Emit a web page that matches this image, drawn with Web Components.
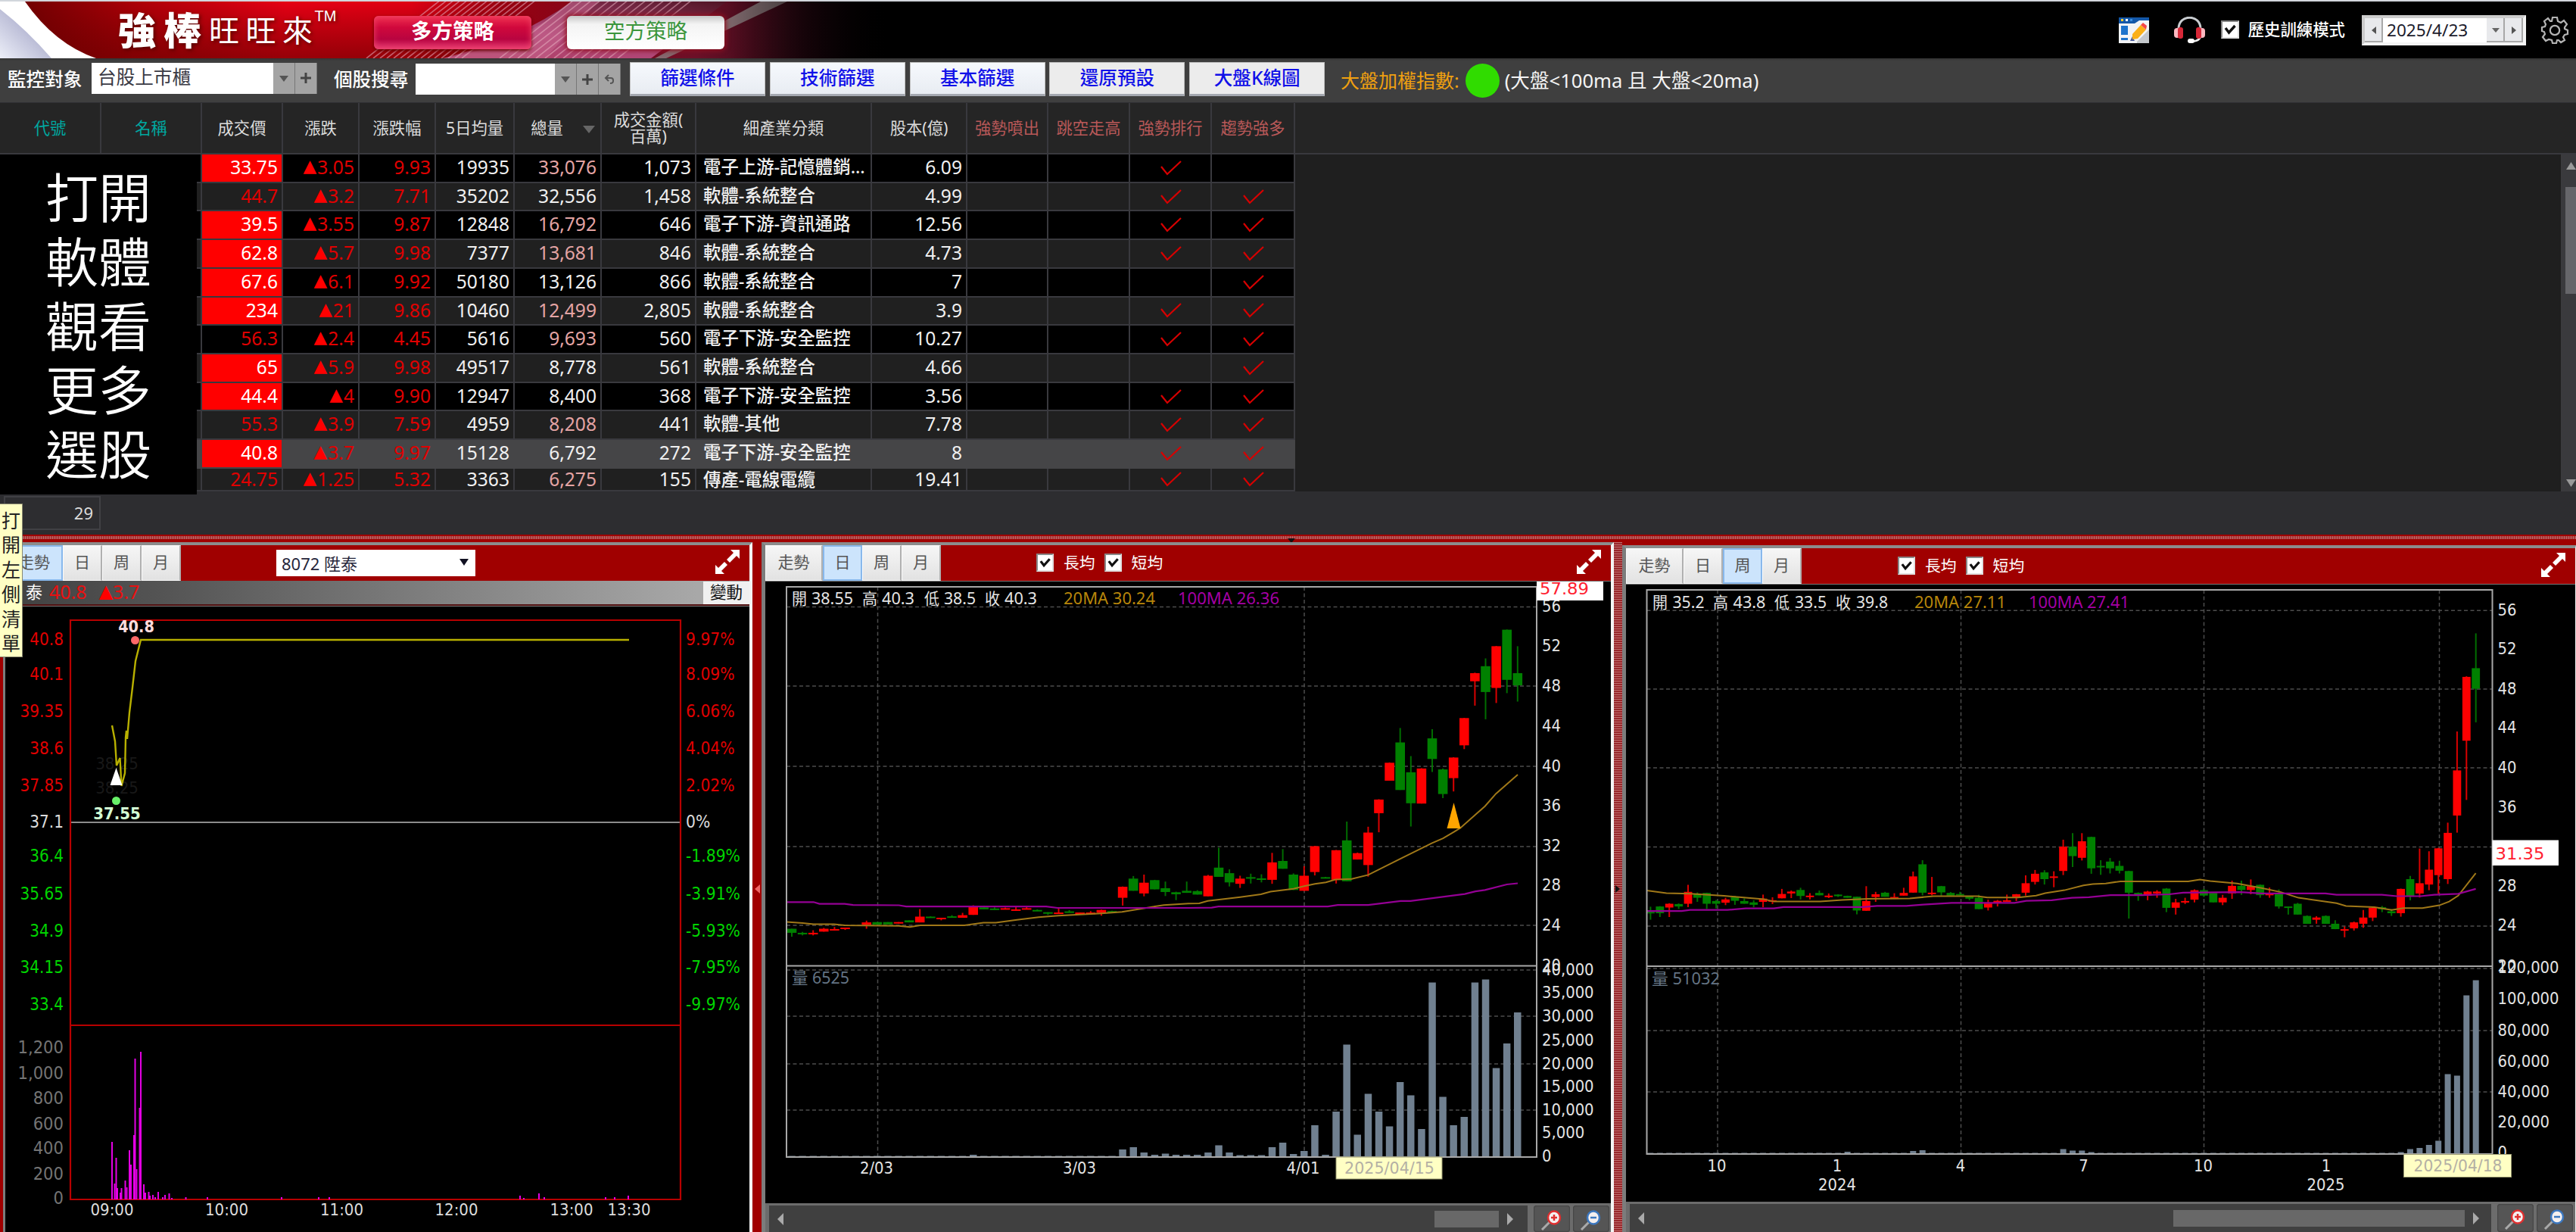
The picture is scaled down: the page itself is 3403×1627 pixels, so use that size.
<!DOCTYPE html>
<html lang="zh-Hant">
<head>
<meta charset="utf-8">
<title>強棒旺旺來</title>
<style>
  body {
    margin: 0;
    width: 3403px;
    height: 1627px;
    overflow: hidden;
    display: flex;
    flex-direction: column;
    background: #a00000;
    color: #fff;
    font-family: "Noto Sans", "Noto Sans CJK TC", sans-serif;
    font-size: 24px;
  }
  .charts {
    display: flex;
    flex: 1;
    min-height: 0;
    padding-left: 4px;
  }
</style>
</head>
<body>
<app-header></app-header>
<tool-bar></tool-bar>
<stock-table></stock-table>
<split-bar></split-bar>
<div class="charts">
  <chart-panel style="width:990px;--left:3px" active="0" kind="intraday">
    <stock-select slot="tools">8072 陞泰</stock-select>
    <intraday-chart></intraday-chart>
  </chart-panel>
  <split-bar vertical plain style="width:12px"></split-bar>
  <chart-panel style="width:1126px" active="1" kind="kline">
    <check-label slot="tools" style="margin-left:126px">長均</check-label>
    <check-label slot="tools" style="margin-left:12px">短均</check-label>
    <kline-chart series="day"></kline-chart>
    <chart-scroll slot="footer" style="--h:38px;--track:1002px;--tl:879px;--tw:85px"></chart-scroll>
  </chart-panel>
  <split-bar vertical style="width:11px"></split-bar>
  <chart-panel style="width:1260px;margin-top:4px;--right:1px" active="2" kind="kline">
    <check-label slot="tools" style="margin-left:127px">長均</check-label>
    <check-label slot="tools" style="margin-left:12px">短均</check-label>
    <kline-chart series="week"></kline-chart>
    <chart-scroll slot="footer" style="--h:40px;--track:1138px;--tl:718px;--tw:385px"></chart-scroll>
  </chart-panel>
</div>
<side-tip></side-tip>

<script>
const CJK = '"Noto Sans", "Noto Sans CJK TC", sans-serif';
const TAHOMA = '"DejaVu Sans Condensed", "DejaVu Sans", "Noto Sans CJK TC", sans-serif';

function shadow(el, html) {
  el.attachShadow({ mode: 'open' }).innerHTML = html;
}

// svg text, y is the middle of the digits
function label(x, y, text, fill, opt = {}) {
  const size = opt.size || 22;
  const len = opt.len ? ` textLength="${opt.len}" lengthAdjust="spacingAndGlyphs"` : '';
  return `<text x="${x}" y="${(y + size * 0.36 - 1).toFixed(1)}" fill="${fill}" font-size="${size}" text-anchor="${opt.anchor || 'start'}" font-weight="${opt.weight || 400}" font-family='${opt.font || TAHOMA}'${len}>${text}</text>`;
}

class AppHeader extends HTMLElement {
  connectedCallback() {
    let stripes = '';
    for (let i = 0; i < 15; i++) {
      stripes += `<path d="M${484 + i * 9} 77 L${582 + i * 9} 0"/>`;
    }
    for (let i = 0; i < 14; i++) {
      stripes += `<path d="M${660 + i * 12} 77 L${758 + i * 12} 0"/>`;
    }
    shadow(this, `
      <style>
        :host {
          display: grid;
          height: 75px;
          border-top: 2px solid #d2d6dc;
          background: #000;
          overflow: hidden;
        }
        .art, .row { grid-area: 1 / 1; }
        .row { display: flex; align-items: center; height: 75px; }
        .brand {
          display: flex;
          align-items: center;
          padding-left: 156px;
          width: 338px;
          text-shadow: 2px 2px 5px #500;
          white-space: nowrap;
        }
        .brand b { font-size: 50px; font-weight: 900; width: 60px; line-height: 70px; }
        .brand span { font-size: 40px; font-weight: 400; width: 48.5px; line-height: 70px; }
        .brand sup { font-size: 20px; font-family: "Liberation Sans"; margin: -38px 0 0 -6px; line-height: 20px; }
        .mode {
          box-sizing: border-box;
          width: 208px;
          height: 44px;
          margin-top: 6px;
          border-radius: 6px;
          font-size: 27.5px;
          line-height: 40px;
          text-align: center;
        }
        .long {
          font-weight: 700;
          background: linear-gradient(#f03050, #d0083c 35%, #b80440 70%, #e83c74);
          box-shadow: inset 0 0 8px #f04468, 0 2px 4px #600;
        }
        .short {
          margin-left: 47px;
          color: #3c963c;
          background: linear-gradient(#c8c8c8, #f4f4f4 25%, #fff);
          box-shadow: 0 0 6px 2px #901020;
        }
        .right { display: flex; align-items: center; margin-left: auto; padding-right: 9px; }
        .right check-label { --cb: 24px; --gap: 12px; font-size: 21.4px; font-weight: 500; margin: 0 22px 2px 21px; }
        .date {
          box-sizing: border-box;
          display: flex;
          width: 217px;
          height: 40px;
          border: 4px solid #eee;
          border-color: #ccc #f4f4f4 #f4f4f4 #ccc;
          background: #fff;
          color: #1c1c2c;
          font-size: 22.6px;
          line-height: 32px;
          margin-right: 19px;
        }
        .date span { flex: 1; padding-left: 5px; }
        .date i {
          width: 24px;
          background: #e8e9ec;
          display: flex;
          align-items: center;
          justify-content: center;
          box-shadow: inset -2px -2px #a8a8a8;
        }
      </style>
      <svg class="art" width="1250" height="75" viewBox="0 2 1250 75">
        <defs>
          <linearGradient id="red" x1="0" x2="1" y1="0" y2="0">
            <stop offset="0" stop-color="#600"/><stop offset=".16" stop-color="#b00008"/>
            <stop offset=".32" stop-color="#e60014"/><stop offset=".46" stop-color="#e00014"/>
            <stop offset=".56" stop-color="#980010"/><stop offset=".78" stop-color="#6c1028"/>
            <stop offset=".9" stop-color="#2a0812"/><stop offset="1" stop-color="#000"/>
          </linearGradient>
          <linearGradient id="shade" x1="0" x2="0" y1="0" y2="1">
            <stop offset="0" stop-color="#500" stop-opacity="0"/><stop offset="1" stop-color="#600" stop-opacity=".62"/>
          </linearGradient>
          <linearGradient id="pink" x1="0" x2="1" y1="1" y2="0">
            <stop offset="0" stop-color="#b03c60"/><stop offset=".4" stop-color="#b04878"/><stop offset="1" stop-color="#501424"/>
          </linearGradient>
          <linearGradient id="lav" x1="0" x2="1" y1="1" y2="0">
            <stop offset="0" stop-color="#eceef8"/><stop offset=".6" stop-color="#b4b6d2"/><stop offset="1" stop-color="#fff"/>
          </linearGradient>
          <linearGradient id="fade" x1="0" x2="1">
            <stop offset="0" stop-color="#000" stop-opacity="0"/><stop offset="1" stop-color="#000"/>
          </linearGradient>
        </defs>
        <rect y="2" width="1180" height="75" fill="url(#red)"/>
        <rect y="2" width="640" height="75" fill="url(#shade)"/>
        <path d="M585 77 Q690 50 755 2 L960 2 L860 77Z" fill="url(#pink)"/>
        <path d="M755 2 Q690 60 585 77 L720 77 L790 2Z" fill="#c86890" opacity=".5"/>
        <g stroke="#e8b0c0" stroke-width="1.6" opacity=".55">${stripes}</g>
        <path d="M1005 2 L1040 2 L880 77 L865 77Z" fill="#888080" opacity=".8"/>
        <rect x="960" y="2" width="210" height="75" fill="url(#fade)"/>
        <rect x="1169" y="2" width="90" height="75" fill="#000"/>
        <path d="M0 2 L33 2 Q72 58 127 77 L0 77Z" fill="#fff"/>
        <path d="M0 12 Q36 40 68 77 L0 77Z" fill="url(#lav)"/>
      </svg>
      <div class="row">
        <div class="brand"><b>強</b><b>棒</b><span>旺</span><span>旺</span><span>來</span><sup>TM</sup></div>
        <div class="mode long">多方策略</div>
        <div class="mode short">空方策略</div>
        <div class="right">
          <svg width="40" height="34" viewBox="0 0 40 34" style="margin-right:33px">
            <rect width="40" height="34" fill="#f2f4f6"/>
            <path d="M0 0H40V4H27L21 8H0Z" fill="#1458a8"/>
            <rect x="3" y="2" width="3" height="3" fill="#fc3"/><rect x="9" y="2" width="3" height="3" fill="#fff"/><rect x="15" y="2" width="3" height="3" fill="#3a8ee0"/>
            <rect x="3" y="11" width="9" height="12" fill="#1e74cc"/><rect x="3" y="27" width="9" height="3" fill="#1e74cc"/>
            <path d="M15 31 L18 25 L21 31Z" fill="#4a5a98"/>
            <path d="M24 32 L40 16 V34 H24Z" fill="#c4c8cc"/>
            <path d="M18 22 L29 10 L36 16 L25 28 L18 29Z" fill="#fbb018"/>
            <path d="M29 10 L32 7 L37 11 L36 16Z" fill="#f44848"/>
          </svg>
          <svg width="41" height="36" viewBox="0 0 41 36">
            <path d="M6 17 C5 -4 36 -4 35 17" fill="none" stroke="#c8ccd0" stroke-width="3"/>
            <path d="M35 25 Q35 32 23 33" fill="none" stroke="#eee" stroke-width="2.5"/>
            <rect x="0" y="15" width="8" height="13" rx="4" fill="#fbb8c0"/><rect x="33" y="15" width="8" height="13" rx="4" fill="#fbb8c0"/>
            <rect x="5" y="14" width="7" height="15" rx="3" fill="#d82838"/><rect x="29" y="14" width="7" height="15" rx="3" fill="#d82838"/>
            <rect x="18" y="29" width="9" height="6" rx="3" fill="#fff"/>
          </svg>
          <check-label>歷史訓練模式</check-label>
          <div class="date">
            <i><svg width="8" height="12"><path d="M7 1V11L1 6Z" fill="#555"/></svg></i>
            <span>2025/4/23</span>
            <i><svg width="12" height="8"><path d="M1 1H11L6 7Z" fill="#666"/></svg></i>
            <i><svg width="8" height="12"><path d="M1 1V11L7 6Z" fill="#555"/></svg></i>
          </div>
          <svg width="38" height="38" viewBox="-19 -19 38 38" fill="none" stroke="#b4b4b4" stroke-width="2.2">
            <path d="M-3 -17H3L4 -12L8 -10L12 -13L16 -8L13 -4L13 -2L17 0V5L13 6L11 9L13 13L8 16L5 13L3 13L2 17H-3L-4 13L-8 12L-12 14L-16 9L-13 5L-14 2L-17 1V-4L-13 -5L-12 -8L-14 -12L-9 -16L-6 -12L-4 -12Z"/>
            <circle r="6.2"/>
          </svg>
        </div>
      </div>
    `);
  }
}

class CheckLabel extends HTMLElement {
  connectedCallback() {
    shadow(this, `
      <style>
        :host { display: flex; align-items: center; gap: var(--gap, 13px); font-size: 20.8px; line-height: 1.2; color: #fff; white-space: nowrap; }
        .box {
          box-sizing: border-box;
          width: var(--cb, 23px);
          height: var(--cb, 24px);
          background: #fff;
          border: 2px solid;
          border-color: #888 #e0e0e0 #e0e0e0 #888;
        }
        svg { display: block; width: 100%; height: 100%; }
      </style>
      <div class="box"><svg viewBox="0 0 20 20"><path d="M4 8 L8.5 14 L16.5 5" fill="none" stroke="#111" stroke-width="3.4"/></svg></div>
      <span><slot></slot></span>
    `);
  }
}

class ToolBar extends HTMLElement {
  connectedCallback() {
    const down = '<svg width="12" height="9"><path d="M0 1H12L6 9Z" fill="#555"/></svg>';
    const plus = '<svg width="16" height="16"><path d="M8 1V15M1 8H15" stroke="#444" stroke-width="3"/></svg>';
    const back = '<svg width="14" height="16"><path d="M6 2L2 6L6 10M2 6H9Q12 6 12 9V10Q12 13 8 13" fill="none" stroke="#555" stroke-width="2"/></svg>';
    shadow(this, `
      <style>
        :host {
          display: flex;
          align-items: center;
          box-sizing: border-box;
          height: 58px;
          padding: 0 0 6px 10px;
          background: linear-gradient(#333, #3f3f3f 6%);
          font-size: 24.6px;
          font-weight: 500;
          white-space: nowrap;
        }
        .combo { display: flex; height: 41px; background: #a4a4a4; margin-right: 22px; }
        .combo div { background: #fff; color: #3a3a44; font-weight: 400; line-height: 38px; padding-left: 8px; box-sizing: border-box; }
        .combo i { display: flex; align-items: center; justify-content: center; width: 29px; box-sizing: border-box; border-right: 1px solid #777; }
        .btn {
          box-sizing: border-box;
          width: 179px;
          height: 45px;
          margin: 2px 5.8px 0 0;
          border: 1px solid #c0c0c0;
          border-bottom: 3px solid #a4a8b0;
          background: linear-gradient(#f6f9fd, #e8ecf2);
          color: #1010e8;
          line-height: 40px;
          text-align: center;
        }
        .flat { background: #ececec; }
        .index { margin: 4px 0 0 15px; color: #f0a010; font-weight: 400; font-size: 25px; display: flex; align-items: center; height: 44px; }
        .dot { width: 45px; height: 45px; border-radius: 50%; background: #30dc00; margin: 2px 7px 0 8px; }
        .rule { color: #f4f4f4; font-size: 25.6px; }
      </style>
      <span style="width:111px">監控對象</span>
      <div class="combo"><div style="width:240px">台股上市櫃</div><i>${down}</i><i>${plus}</i></div>
      <span style="width:108px">個股搜尋</span>
      <div class="combo" style="margin-right:12px;margin-top:3px"><div style="width:184px"></div><i>${down}</i><i>${plus}</i><i>${back}</i></div>
      <div class="btn">篩選條件</div>
      <div class="btn">技術篩選</div>
      <div class="btn">基本篩選</div>
      <div class="btn flat">還原預設</div>
      <div class="btn flat">大盤K線圖</div>
      <div class="index"><span>大盤加權指數:</span><div class="dot"></div><span class="rule">(大盤&lt;100ma 且 大盤&lt;20ma)</span></div>
    `);
  }
}

// price, limit-up, change, percent, 5-day average, volume, pink volume, amount, sector, capital, flag 3, flag 4
const STOCKS = [
  ['33.75', 1, '3.05', '9.93', '19935', '33,076', 1, '1,073', '電子上游-記憶體銷...', '6.09', 1, 0],
  ['44.7', 0, '3.2', '7.71', '35202', '32,556', 0, '1,458', '軟體-系統整合', '4.99', 1, 1],
  ['39.5', 1, '3.55', '9.87', '12848', '16,792', 1, '646', '電子下游-資訊通路', '12.56', 1, 1],
  ['62.8', 1, '5.7', '9.98', '7377', '13,681', 1, '846', '軟體-系統整合', '4.73', 1, 1],
  ['67.6', 1, '6.1', '9.92', '50180', '13,126', 0, '866', '軟體-系統整合', '7', 0, 1],
  ['234', 1, '21', '9.86', '10460', '12,499', 1, '2,805', '軟體-系統整合', '3.9', 1, 1],
  ['56.3', 0, '2.4', '4.45', '5616', '9,693', 1, '560', '電子下游-安全監控', '10.27', 1, 1],
  ['65', 1, '5.9', '9.98', '49517', '8,778', 0, '561', '軟體-系統整合', '4.66', 0, 1],
  ['44.4', 1, '4', '9.90', '12947', '8,400', 0, '368', '電子下游-安全監控', '3.56', 1, 1],
  ['55.3', 0, '3.9', '7.59', '4959', '8,208', 1, '441', '軟體-其他', '7.78', 1, 1],
  ['40.8', 1, '3.7', '9.97', '15128', '6,792', 0, '272', '電子下游-安全監控', '8', 1, 1],
  ['24.75', 0, '1.25', '5.32', '3363', '6,275', 1, '155', '傳產-電線電纜', '19.41', 1, 1]
];

class StockTable extends HTMLElement {
  connectedCallback() {
    const tick = '<svg width="28" height="20"><path d="M1 8L9 18L27 1" fill="none" stroke="#d80000" stroke-width="2.2"/></svg>';
    const heads = ['代號', '名稱', '成交價', '漲跌', '漲跌幅', '5日均量', '總量', '成交金額(<br>百萬)', '細產業分類', '股本(億)', '強勢噴出', '跳空走高', '強勢排行', '趨勢強多'];
    const head = heads.map((h, i) => {
      const cls = i < 2 ? 'teal' : i > 9 ? 'rose' : i === 6 ? 'sorted' : '';
      return `<div class="${cls}"><span>${h}</span></div>`;
    }).join('');
    const rows = STOCKS.map((s, i) => `
      <div class="grid row ${i % 2 ? 'alt' : ''} ${i === 10 ? 'sel' : ''}">
        <div></div><div></div>
        <div class="${s[1] ? 'limit' : 'up'}">${s[0]}</div>
        <div class="up"><em>▲</em>${s[2]}</div>
        <div class="up">${s[3]}</div>
        <div>${s[4]}</div>
        <div class="${s[6] ? 'pink' : ''}">${s[5]}</div>
        <div>${s[7]}</div>
        <div class="sector">${s[8]}</div>
        <div>${s[9]}</div>
        <div></div><div></div>
        <div class="tick">${s[10] ? tick : ''}</div>
        <div class="tick">${s[11] ? tick : ''}</div>
      </div>`).join('');
    shadow(this, `
      <style>
        :host { display: block; position: relative; height: 571px; background: #2d2d30; }
        .grid {
          display: grid;
          width: 1711px;
          grid-template-columns: 134px 133px 107px 101px 101px 104px 115px 125px 232px 126px 107px 108px 108px 110px;
        }
        .headbar { box-sizing: border-box; height: 69px; background: #252525; border-top: 1px solid #303034; border-bottom: 2px solid #39393e; }
        .head > div {
          box-sizing: border-box;
          height: 66px;
          display: flex;
          align-items: center;
          justify-content: center;
          border-right: 2px solid #39393e;
          font-size: 21.3px;
          line-height: 22px;
          text-align: center;
          color: #dcdcdc;
          white-space: nowrap;
        }
        .head .teal { color: #00a8a0; }
        .head .rose { color: #b85858; }
        .head .sorted { gap: 26px; padding-left: 14px; }
        .sorted::after { content: ""; border: 8px solid transparent; border-top: 10px solid #666; border-bottom: 0; margin-top: 4px; }
        .body { display: flex; height: 445px; background: #1f1f1f; }
        .rows { width: 1711px; height: 443px; overflow: hidden; border-bottom: 2px solid #39393e; }
        .row { height: 37.73px; background: #000; }
        .row > div {
          box-sizing: border-box;
          border-right: 2px solid #39393e;
          border-bottom: 2px solid #39393e;
          padding-right: 5px;
          text-align: right;
          font-size: 24.6px;
          line-height: 33px;
          white-space: nowrap;
          color: #f0f0f0;
        }
        .alt { background: #202020; }
        .sel { background: #454547; }
        .sel > div { border-color: #454547; }
        .row:last-child { height: 28px; }
        .row:last-child > div { border-bottom: 0; line-height: 28px; }
        .row .limit { background: #f00; color: #fff; }
        .row .up { color: #e00000; }
        .row .pink { color: #e4a4a4; }
        .row .sector { text-align: left; padding-left: 9px; font-size: 23.4px; font-weight: 500; }
        .row .tick { display: flex; align-items: center; justify-content: center; padding: 0 0 0 2px; }
        em { font-style: normal; font-family: "DejaVu Sans"; font-size: 23px; line-height: 0; vertical-align: 3px; color: #f00; margin-right: 1px; }
        .bar {
          margin-left: auto;
          width: 20px;
          background: #3a3a3d;
          display: flex;
          flex-direction: column;
          align-items: flex-end;
          justify-content: space-between;
        }
        .bar i { width: 14px; height: 141px; background: #66666a; margin-bottom: 228px; }
        .foot { box-sizing: border-box; width: 128px; height: 45px; margin: 6px 0 0 5px; border: 2px solid #404044; padding-right: 8px; text-align: right; font-size: 22px; line-height: 41px; color: #ddd; }
        .promo {
          position: absolute;
          left: 0;
          top: 69px;
          width: 260px;
          height: 434px;
          padding-top: 15px;
          background: #000;
          text-align: center;
          font-size: 70px;
          font-weight: 350;
          line-height: 84.8px;
        }
      </style>
      <div class="headbar"><div class="grid head">${head}</div></div>
      <div class="body">
        <div class="rows">${rows}</div>
        <div class="bar">
          <svg width="14" height="30"><path d="M1 20H14L7.500 10Z" fill="#999"/></svg>
          <i></i>
          <svg width="14" height="20"><path d="M1 4H14L7.500 14Z" fill="#999"/></svg>
        </div>
      </div>
      <div class="foot">29</div>
      <div class="promo">打開<br>軟體<br>觀看<br>更多<br>選股</div>
    `);
  }
}

class SplitBar extends HTMLElement {
  connectedCallback() {
    const vertical = this.hasAttribute('vertical');
    const plain = this.hasAttribute('plain');
    const grip = vertical
      ? (plain ? '<svg width="9" height="14"><path d="M8 0V12L1 6Z" fill="#f06868"/></svg>' : '<svg width="9" height="14"><path d="M1 1V11L7 6Z" fill="#111"/></svg>')
      : '<svg width="10" height="6"><path d="M0 0H10L5 6Z" fill="#111"/></svg>';
    shadow(this, `
      <style>
        :host { display: block; height: 10px; background: #a00000; overflow: hidden; }
        :host([vertical]) { height: auto; }
        div { height: 4px; margin-top: 2px; background: repeating-linear-gradient(90deg, #c06868 0 1px, #a43c3c 1px 3px); padding-left: 1701px; line-height: 0; }
        :host([vertical]) div { padding: 452px 0 0; height: 100%; margin: 0; box-sizing: border-box; text-align: center; background: repeating-linear-gradient(#c07070 0 1px, #98282c 1px 3px); }
        :host([plain]) div { background: none; }
      </style>
      <div>${grip}</div>
    `);
  }
}

class StockSelect extends HTMLElement {
  connectedCallback() {
    shadow(this, `
      <style>
        :host {
          display: flex;
          align-items: center;
          justify-content: space-between;
          box-sizing: border-box;
          width: 263px;
          height: 35px;
          margin-left: 126px;
          padding: 0 9px 2px 7px;
          background: #fff;
          color: #26263a;
          font-size: 22px;
        }
      </style>
      <span><slot></slot></span>
      <svg width="12" height="9"><path d="M0 0H12L6 9Z" fill="#112"/></svg>
    `);
  }
}

class ChartPanel extends HTMLElement {
  connectedCallback() {
    const active = Number(this.getAttribute('active'));
    const tabs = ['走勢', '日', '周', '月'].map((t, i) => `<div class="tab ${i === active ? 'on' : ''}">${t}</div>`).join('');
    const quote = this.getAttribute('kind') === 'intraday' ? `
      <div class="quote"><span>泰</span><b>40.8</b><b class="chg"><em>▲</em>3.7</b><i>變動</i></div>` : '';
    shadow(this, `
      <style>
        :host {
          display: flex;
          flex-direction: column;
          box-sizing: border-box;
          border-style: solid;
          border-width: 4px var(--right, 4px) 0 var(--left, 5px);
          border-color: #8c8c8c #f4f4f4 #8c8c8c #7c7c7c;
          overflow: hidden;
          background: #000;
        }
        .title { display: flex; align-items: center; height: 47px; background: #a00000; flex: none; }
        .tab {
          box-sizing: border-box;
          width: 52px;
          height: 47px;
          background: linear-gradient(#f6f6f6, #e2e2e2);
          border: 1px solid #fafafa;
          border-right: 2px solid #b0b0b0;
          color: #555;
          font-size: 21px;
          line-height: 42px;
          text-align: center;
        }
        .tab:first-child { width: 76px; }
        .tab.on { background: #cce4fc; border: 2px solid #88b8ec; line-height: 40px; }
        .expand { margin: 0 12px 3px auto; }
        .quote {
          display: flex;
          align-items: center;
          height: 31px;
          flex: none;
          border-bottom: 2px solid #501010;
          background: linear-gradient(90deg, #404040, #555 22%, #808080 58%, #a8a8a8 93%);
          font-size: 22px;
          line-height: 29px;
          padding-left: 27px;
        }
        .quote span, .quote b { margin-top: -2px; }
        .quote b { font-weight: 400; font-size: 25px; color: #e81010; margin-left: 9px; }
        .quote .chg { margin-left: 16px; }
        em { font-style: normal; font-family: "DejaVu Sans"; font-size: 24px; line-height: 0; vertical-align: 2px; color: #f00; }
        .quote i { font-style: normal; width: 61px; height: 30px; margin-left: auto; background: #f0f0f0; color: #111; text-align: center; line-height: 28px; font-size: 21.5px; }
        .view { flex: 1; min-height: 0; border-top: 1px solid #777; }
      </style>
      <div class="title">
        ${tabs}
        <slot name="tools"></slot>
        <svg class="expand" width="34" height="34" viewBox="0 0 34 34">
          <path d="M21 1H33V13L29 9L20 18L16 14L25 5Z" fill="#fff"/>
          <path d="M1 21V33H13L9 29L17 21L13 17L5 25Z" fill="#fff"/>
        </svg>
      </div>
      ${quote}
      <div class="view"><slot></slot></div>
      <slot name="footer"></slot>
    `);
  }
}

class ChartScroll extends HTMLElement {
  connectedCallback() {
    const lens = (color, sign) => `
      <svg width="30" height="32" viewBox="0 0 30 32">
        <path d="M2 30L12 20" stroke="#aaa" stroke-width="3"/>
        <ellipse cx="18" cy="14" rx="8" ry="8.500" fill="#f4f0f0" stroke="${color}" stroke-width="2.500"/>
        <path d="${sign}" stroke="${color}" stroke-width="2.500"/>
      </svg>`;
    shadow(this, `
      <style>
        :host { display: flex; height: var(--h); background: #6c6c6c; flex: none; box-sizing: border-box; border-top: 3px solid #6c6c6c; padding-left: 5px; }
        .track { display: flex; align-items: center; width: var(--track); background: #404040; }
        .track svg { margin-left: 10px; }
        .thumb { width: var(--tw); height: 22px; background: #686868; margin-left: calc(var(--tl) - 20px); }
        .btn { display: flex; justify-content: center; align-items: center; width: 48px; margin-left: 8px; border-radius: 4px; background: #555; box-shadow: inset 0 0 2px #222; }
        .btn + .btn { margin-left: 4px; }
      </style>
      <div class="track">
        <svg width="10" height="16"><path d="M9 0V16L1 8Z" fill="#aaa"/></svg>
        <div class="thumb"></div>
        <svg width="10" height="16"><path d="M1 0V16L9 8Z" fill="#aaa"/></svg>
      </div>
      <div class="btn">${lens('#e03030', 'M14 14H22M18 10V18')}</div>
      <div class="btn">${lens('#3c78c0', 'M14 14H22')}</div>
    `);
  }
}

class IntradayChart extends HTMLElement {
  connectedCallback() {
    const prices = [['40.8', 844, '9.97%'], ['40.1', 889.5, '8.09%'], ['39.35', 939, '6.06%'], ['38.6', 988, '4.04%'], ['37.85', 1036.5, '2.02%'], ['37.1', 1085, '0%'],
      ['36.4', 1130, '-1.89%'], ['35.65', 1180, '-3.91%'], ['34.9', 1229, '-5.93%'], ['34.15', 1277, '-7.95%'], ['33.4', 1325.5, '-9.97%']];
    const volumes = [['1,200', 1382], ['1,000', 1416.5], ['800', 1449], ['600', 1483], ['400', 1515], ['200', 1549], ['0', 1581]];
    const times = [['09:00', 148], ['10:00', 299.5], ['11:00', 451.5], ['12:00', 603], ['13:00', 755], ['13:30', 831]];
    const bars = [[148, 1507], [151.5, 1562], [153.5, 1528], [155, 1568], [159, 1574], [160.5, 1568], [165.5, 1558], [167.5, 1567], [171, 1518], [173, 1537], [177, 1498], [178.5, 1397], [180.5, 1543],
      [184.5, 1462], [186, 1388], [190, 1563], [192, 1574], [196.5, 1573], [198, 1578], [202, 1577], [205, 1580], [209, 1573], [215, 1580], [218, 1577], [223.5, 1575], [227, 1581], [245.5, 1580], [274, 1580],
      [372, 1580], [421, 1580], [435, 1580], [687, 1578], [692, 1581], [712, 1575], [719, 1580], [800, 1580], [812, 1580], [830, 1578]];
    let svg = '';
    prices.forEach(([p, y, pct], i) => {
      const c = i < 5 ? '#e00000' : i === 5 ? '#dcdcdc' : '#00d400';
      svg += label(84, y, p, c, { anchor: 'end', size: 22.3 }) + label(906, y, pct, c, { size: 22.6 });
    });
    volumes.forEach(([v, y]) => { svg += label(84, y, v, '#747474', { anchor: 'end', size: 23.5 }); });
    times.forEach(([t, x]) => { svg += label(x, 1597, t, '#dcdcdc', { anchor: 'middle' }); });
    bars.forEach(([x, y]) => { svg += `<rect x="${x - 1}" y="${y}" width="2" height="${1583 - y}" fill="#e400e4"/>`; });
    shadow(this, `
      <style>:host, svg { display: block; }</style>
      <svg width="983" height="827" viewBox="7 800 983 827">
        <path d="M93 1085H899" stroke="#8c8c8c" stroke-width="2"/>
        <path d="M93 818H899V1583H93ZM93 1353H899" fill="none" stroke="#b80000" stroke-width="2.200"/>
        ${svg}
        ${label(154.5, 1008, '38.25', '#181818', { anchor: 'middle' })}
        ${label(154.5, 1040, '38.25', '#181818', { anchor: 'middle' })}
        <path d="M148 957L152 978L154 1010L158.500 1000L160.500 1037L165 1020L166 973L167 964L168 975L171 940L175 907L179 872L186 844H831" fill="none" stroke="#b8b000" stroke-width="2.400"/>
        <path d="M153.500 1013L161.500 1036H145.500Z" fill="#fff"/>
        <circle cx="178.500" cy="844.500" r="5.500" fill="#ff6868"/>
        <circle cx="153.500" cy="1056.500" r="5.500" fill="#68f068"/>
        ${label(180, 827, '40.8', '#ffdcdc', { anchor: 'middle', weight: 700, size: 21.5 })}
        ${label(154.5, 1074.5, '37.55', '#d4ffd4', { anchor: 'middle', weight: 700, size: 22 })}
      </svg>
    `);
  }
}

// candles: slot index, colour, high, body top, body bottom, low (chart units, scaled by ky)
const SERIES = {
  day: {
    view: [1011, 768, 1117, 821],
    plot: [1039, 775, 2030, 1275.5, 1528],
    x0: 1046, dx: 14.1, body: 12.6, barWidth: 9.5,
    ux: 990, kx: 2.7034, ky: 2.6133,
    gridY: [801.4, 906, 1012, 1118, 1222, 1281, 1342, 1405, 1466],
    gridX: [1159.5, 1723],
    labelX: 2037,
    labels: [['56', 801], ['52', 853.5], ['48', 906], ['44', 959.5], ['40', 1012], ['36', 1064], ['32', 1117.5], ['28', 1169.5], ['24', 1222], ['20', 1275.5],
      ['40,000', 1281], ['35,000', 1311.5], ['30,000', 1342], ['25,000', 1374], ['20,000', 1405], ['15,000', 1435.5], ['10,000', 1466], ['5,000', 1496.5], ['0', 1527]],
    dates: [['2/03', 1158, 1543], ['3/03', 1426, 1543], ['4/01', 1721.5, 1543]],
    legendY: 791,
    legend: [['開', 1046, 20, '#e4e4e4'], ['38.55', 1072, 55, '#e4e4e4'], ['高', 1139, 20, '#e4e4e4'], ['40.3', 1165, 43, '#e4e4e4'], ['低', 1221, 20, '#e4e4e4'], ['38.5', 1247, 42, '#e4e4e4'],
      ['收', 1301, 20, '#e4e4e4'], ['40.3', 1327, 43, '#e4e4e4'], ['20MA 30.24', 1405, 121, '#b8860b'], ['100MA 26.36', 1556, 134, '#a400a4']],
    volume: ['量 6525', 1046, 1292, 76],
    tag: ['57.89', 2030, 768, 88, 25],
    tip: ['2025/04/15', 1765, 1528, 140, 29, 1776, 119],
    candles: `0 G 1376 1376 1390 1403|1 G 1387 1390 1394 1399|2 R 1381 1390 1395 1399|3 R 1373 1376 1386 1386|4 R 1370 1377 1381 1381|5 R 1372 1372 1377 1380|7 R 1348 1354 1363 1376|8 G 1353 1353 1362 1362|9 G 1353 1353 1361 1361|10 R 1353 1353 1358 1358|11 G 1347 1347 1354 1354|12 R 1308 1334 1354 1354|13 G 1333 1334 1338 1338|14 R 1338 1338 1343 1347|15 G 1329 1333 1338 1338|16 R 1321 1329 1338 1338|17 R 1295 1300 1328 1328|18 G 1296 1302 1309 1309|19 G 1302 1306 1310 1310|20 R 1303 1305 1309 1309|21 R 1300 1309 1314 1314|22 R 1300 1305 1309 1309|23 G 1309 1311 1315 1315|24 G 1319 1319 1324 1328|25 R 1306 1320 1325 1325|26 G 1312 1316 1320 1320|27 R 1320 1320 1325 1325|28 R 1315 1320 1326 1326|29 R 1310 1311 1321 1331|30 G 1314 1315 1319 1319|31 R 1230 1231 1269 1296|32 G 1194 1203 1245 1245|33 R 1189 1217 1254 1264|34 G 1207 1208 1240 1240|35 G 1213 1236 1249 1263|36 G 1248 1250 1257 1277|37 G 1213 1245 1252 1252|38 G 1243 1246 1258 1258|39 R 1190 1193 1264 1264|40 G 1096 1165 1197 1197|41 G 1171 1184 1216 1230|42 R 1193 1203 1221 1235|43 G 1186 1198 1202 1220|44 G 1188 1202 1207 1216|45 R 1114 1147 1207 1221|46 G 1101 1142 1169 1169|47 G 1185 1189 1242 1242|48 R 1160 1193 1245 1245|49 R 1090 1091 1180 1192|50 G 1197 1198 1202 1202|51 R 1104 1105 1207 1220|52 G 1006 1071 1212 1212|53 R 1113 1115 1137 1137|54 R 1024 1044 1156 1196|55 R 929 930 977 1043|56 R 802 803 865 865|57 G 683 733 897 897|58 G 780 836 943 1023|59 R 822 823 944 944|60 G 687 719 790 835|61 G 823 826 911 925|62 R 784 785 856 902|63 R 648 649 743 756|64 R 492 494 522 606|65 G 443 470 559 653|66 R 400 401 545 597|67 G 343 344 517 563|68 G 401 494 536 592`,
    ma20: '133,1352 190,1356 229,1360 302,1360 340,1364 534,1366 573,1370 610,1364 768,1364 836,1355 880,1355 955,1345 1033,1336 1103,1331 1258,1323 1331,1318 1409,1305 1480,1294 1568,1289 1606,1288 1637,1280 1753,1267 1827,1257 1861,1248 1943,1238 1981,1229 2020,1221 2059,1216 2093,1206 2151,1204 2210,1190 2326,1134 2438,1080 2477,1064 2516,1042 2539,1028 2593,982 2627,953 2666,910 2744,844',
    ma100: '133,1284 229,1284 250,1290 340,1290 370,1294 534,1295 560,1299 1060,1299 1100,1304 1568,1304 1651,1303 1675,1299 2066,1299 2101,1294 2210,1294 2326,1280 2361,1280 2555,1256 2593,1247 2627,1242 2705,1223 2744,1219',
    bars: { 17: 1525, 31: 1518, 32: 1515, 33: 1522, 34: 1525, 35: 1523.5, 36: 1525, 37: 1525, 38: 1525, 39: 1522, 40: 1512.5, 41: 1522, 42: 1525.5, 43: 1525.5, 44: 1525.5, 45: 1515, 46: 1509, 47: 1524, 48: 1520, 49: 1486, 50: 1525, 51: 1468, 52: 1379.5, 53: 1498.5, 54: 1444.5, 55: 1468, 56: 1487.5, 57: 1429, 58: 1446.5, 59: 1491, 60: 1297.5, 61: 1448.5, 62: 1486, 63: 1475, 64: 1297.5, 65: 1293.5, 66: 1410.5, 67: 1378, 68: 1337 },
    count: 69,
    mark: 'M1920.500 1060L1929.500 1094H1911.500Z'
  },
  week: {
    view: [2148, 771, 1254, 816],
    plot: [2175.5, 778, 3292.5, 1275, 1523],
    x0: 2180.4, dx: 12.39, body: 10.8, barWidth: 8,
    ux: 2130, kx: 2.24, ky: 2.8,
    gridY: [805.2, 909, 1013, 1117.4, 1222, 1278, 1360, 1441],
    gridX: [2269, 2590.5, 2911.5, 3222.5],
    labelX: 3299.5,
    labels: [['56', 805], ['52', 856.5], ['48', 909], ['44', 960.5], ['40', 1013], ['36', 1065], ['28', 1169], ['24', 1221.5], ['20', 1275],
      ['120,000', 1277], ['100,000', 1318.5], ['80,000', 1360], ['60,000', 1401], ['40,000', 1441], ['20,000', 1481.5], ['0', 1521]],
    dates: [['10', 2268, 1539], ['1', 2427, 1539], ['4', 2590, 1539], ['7', 2752.5, 1539], ['10', 2910.5, 1539], ['1', 3073, 1539], ['2024', 2427, 1564], ['2025', 3072.5, 1564]],
    legendY: 795,
    legend: [['開', 2183, 20, '#e4e4e4'], ['35.2', 2209.5, 42, '#e4e4e4'], ['高', 2263, 20, '#e4e4e4'], ['43.8', 2289.5, 43, '#e4e4e4'], ['低', 2344, 20, '#e4e4e4'], ['33.5', 2371, 42, '#e4e4e4'],
      ['收', 2425, 20, '#e4e4e4'], ['39.8', 2452, 42, '#e4e4e4'], ['20MA 27.11', 2529, 121, '#b8860b'], ['100MA 27.41', 2680, 133, '#a400a4']],
    volume: ['量 51032', 2182, 1292, 90],
    tag: ['31.35', 3292.5, 1108.5, 87.5, 33.5],
    tip: ['2025/04/18', 3175.5, 1523.5, 142, 30, 3188.5, 117],
    candles: `0 G 1390 1409 1413 1438|1 G 1388 1389 1414 1428|2 R 1377 1379 1393 1428|3 G 1378 1380 1389 1398|4 R 1309 1335 1379 1392|5 G 1337 1343 1357 1372|6 G 1338 1339 1379 1398|7 G 1365 1369 1379 1396|8 R 1357 1363 1375 1384|9 G 1350 1354 1368 1383|10 G 1359 1369 1379 1379|11 G 1366 1374 1383 1392|12 R 1345 1360 1372 1392|13 R 1355 1366 1371 1380|14 R 1324 1343 1359 1359|15 R 1330 1334 1341 1358|16 G 1320 1328 1350 1363|17 R 1340 1349 1352 1363|18 G 1330 1339 1348 1348|19 R 1341 1349 1353 1358|20 G 1344 1345 1351 1354|21 G 1349 1350 1357 1357|22 G 1352 1353 1404 1418|23 R 1314 1369 1405 1405|24 R 1335 1344 1354 1372|25 G 1335 1338 1353 1353|26 R 1340 1354 1361 1361|27 R 1320 1339 1349 1349|28 R 1260 1278 1338 1338|29 G 1218 1233 1338 1348|30 R 1280 1338 1343 1348|31 G 1313 1314 1337 1349|32 G 1336 1339 1349 1349|33 G 1335 1343 1348 1348|34 G 1350 1352 1360 1366|35 G 1346 1357 1399 1399|36 R 1364 1378 1393 1404|37 R 1365 1368 1376 1389|38 R 1345 1366 1370 1370|39 R 1343 1344 1355 1369|40 R 1274 1303 1338 1349|41 R 1254 1268 1298 1308|42 G 1255 1263 1288 1308|43 R 1259 1278 1282 1318|44 R 1142 1168 1258 1273|45 G 1118 1168 1203 1243|46 R 1118 1148 1209 1219|47 G 1131 1132 1248 1268|48 G 1218 1239 1242 1272|49 G 1210 1223 1248 1267|50 G 1220 1239 1257 1267|51 G 1257 1258 1338 1434|52 G 1337 1339 1344 1368|53 R 1331 1334 1349 1366|54 R 1329 1334 1341 1357|55 G 1321 1323 1394 1410|56 R 1361 1374 1394 1419|57 R 1357 1369 1374 1380|58 R 1326 1329 1364 1374|59 G 1324 1329 1349 1354|60 G 1338 1339 1374 1374|61 R 1346 1357 1374 1384|62 R 1294 1313 1341 1361|63 G 1294 1313 1328 1346|64 R 1289 1314 1328 1344|65 G 1308 1309 1347 1357|66 R 1319 1342 1347 1357|67 G 1326 1342 1389 1397|68 G 1389 1389 1394 1419|69 G 1376 1379 1419 1419|70 G 1422 1424 1453 1453|71 R 1425 1430 1438 1453|72 G 1422 1424 1453 1453|73 G 1440 1453 1473 1473|74 R 1463 1473 1478 1503|75 R 1445 1448 1470 1478|76 R 1402 1430 1453 1468|77 R 1389 1394 1430 1443|78 G 1387 1392 1399 1410|79 G 1399 1407 1414 1424|80 R 1323 1324 1414 1427|81 G 1276 1288 1351 1366|82 R 1175 1303 1341 1356|83 R 1185 1253 1308 1329|84 R 1172 1174 1273 1342|85 R 1079 1117 1288 1306|86 R 742 886 1053 1116|87 R 538 540 776 995|88 G 379 508 584 708`,
    ma20: '102,1330 160,1340 230,1342 285,1346 330,1350 395,1357 448,1362 478,1371 615,1371 680,1365 755,1361 880,1359 950,1351 1080,1351 1110,1356 1200,1356 1254,1349 1281,1340 1338,1329 1394,1311 1422,1306 1460,1304 1503,1296 1704,1296 1739,1289 1769,1295 1849,1304 1921,1321 1978,1336 2030,1357 2143,1377 2171,1387 2255,1392 2306,1402 2341,1395 2397,1395 2447,1385 2476,1371 2503,1349 2555,1266',
    ma100: '102,1406 205,1406 230,1402 340,1402 395,1396 478,1396 506,1391 740,1391 783,1387 870,1387 920,1382 1004,1376 1190,1376 1225,1368 1300,1366 1360,1357 1410,1355 1474,1347 1568,1347 1648,1344 1689,1338 1859,1336 1921,1341 2110,1341 2143,1346 2277,1346 2321,1351 2392,1351 2432,1346 2503,1342 2555,1324',
    bars: { 21: 1520, 28: 1519, 29: 1518, 44: 1516.5, 45: 1518.5, 46: 1518.5, 47: 1520.5, 80: 1520.5, 81: 1516.5, 82: 1515, 83: 1511, 84: 1505.5, 85: 1417.5, 86: 1419.5, 87: 1313.5, 88: 1293.5 },
    count: 89,
    mark: ''
  }
};

class KlineChart extends HTMLElement {
  connectedCallback() {
    const s = SERIES[this.getAttribute('series')];
    const [left, top, right, mid, bottom] = s.plot;
    const y = v => 700 + v / s.ky;
    const line = pts => pts.split(' ').map(p => {
      const [px, py] = p.split(',').map(Number);
      return (s.ux + px / s.kx).toFixed(1) + ',' + y(py).toFixed(1);
    }).join(' ');

    let grid = '';
    s.gridY.forEach(g => { grid += `M${left} ${g}H${right}`; });
    s.gridX.forEach(g => { grid += `M${g} ${top}V${bottom}`; });

    let candles = '';
    s.candles.split('|').forEach(c => {
      const [i, color, h, t, b, l] = c.split(' ');
      const x = s.x0 + i * s.dx;
      const fill = color === 'R' ? '#f00' : '#008000';
      candles += `<path d="M${x.toFixed(1)} ${y(+h).toFixed(1)}V${y(+l).toFixed(1)}" stroke="${fill}" stroke-width="2" opacity=".85"/>
        <rect x="${(x - s.body / 2).toFixed(1)}" y="${y(+t).toFixed(1)}" width="${s.body}" height="${Math.max(2, (b - t) / s.ky).toFixed(1)}" fill="${fill}"/>`;
    });

    let bars = '';
    for (let i = 0; i < s.count; i++) {
      const v = s.bars[i] || bottom - 1.5;
      bars += `<rect x="${(s.x0 + i * s.dx - s.barWidth / 2).toFixed(1)}" y="${v}" width="${s.barWidth}" height="${bottom - v}" fill="#708090"/>`;
    }

    let text = '';
    s.labels.forEach(([t, ly]) => { text += label(s.labelX, ly, t, '#e4e4e4', { size: 21.8 }); });
    s.dates.forEach(([t, x, ly]) => { text += label(x, ly, t, '#e4e4e4', { size: 21.8, anchor: 'middle' }); });
    s.legend.forEach(([t, x, len, fill]) => { text += label(x, s.legendY, t, fill, { size: 21, len, font: CJK }); });

    const [tag, gx, gy, gw, gh] = s.tag;
    const [tip, tx, ty, tw, th, textX, textLen] = s.tip;
    shadow(this, `
      <style>:host, svg { display: block; }</style>
      <svg width="${s.view[2]}" height="${s.view[3]}" viewBox="${s.view.join(' ')}">
        <path d="${grid}" stroke="#4c4c4c" stroke-width="1.500" stroke-dasharray="5 3.500" fill="none"/>
        ${bars}
        ${candles}
        <polyline points="${line(s.ma20)}" fill="none" stroke="#a07818" stroke-width="2"/>
        <polyline points="${line(s.ma100)}" fill="none" stroke="#940094" stroke-width="2.200"/>
        <path d="${s.mark}" fill="#ffa500"/>
        <path d="M${left} ${top}H${right}V${bottom}H${left}ZM${left} ${mid}H${right}" fill="none" stroke="#a8a8a8" stroke-width="2"/>
        ${text}
        ${label(s.volume[1], s.volume[2], s.volume[0], '#647484', { size: 21, len: s.volume[3], font: CJK })}
        <rect x="${gx}" y="${gy}" width="${gw}" height="${gh}" fill="#fff"/>
        ${label(gx + 4, gy + (gh > 30 ? gh / 2 + 2 : 10.5), tag, '#ff2030', { size: 22, len: 65, font: '"DejaVu Sans"' })}
        <rect x="${tx}" y="${ty}" width="${tw}" height="${th}" fill="#ffffc4" stroke="#999970"/>
        ${label(textX, ty + th / 2 + 1, tip, '#b4b0a4', { size: 21.5, len: textLen })}
      </svg>
    `);
  }
}

// pull-out handle that floats over the left edge
class SideTip extends HTMLElement {
  connectedCallback() {
    shadow(this, `
      <style>
        :host {
          position: absolute;
          left: 0;
          top: 665px;
          box-sizing: border-box;
          width: 30px;
          height: 203px;
          padding-top: 5px;
          border: 1px solid #888870;
          border-left: 0;
          background: #ffffc4;
          color: #222;
          font-size: 25px;
          line-height: 32.4px;
          text-align: center;
        }
      </style>
      打<br>開<br>左<br>側<br>清<br>單
    `);
  }
}

customElements.define('check-label', CheckLabel);
customElements.define('app-header', AppHeader);
customElements.define('tool-bar', ToolBar);
customElements.define('stock-table', StockTable);
customElements.define('split-bar', SplitBar);
customElements.define('stock-select', StockSelect);
customElements.define('chart-panel', ChartPanel);
customElements.define('chart-scroll', ChartScroll);
customElements.define('intraday-chart', IntradayChart);
customElements.define('kline-chart', KlineChart);
customElements.define('side-tip', SideTip);
</script>
</body>
</html>
